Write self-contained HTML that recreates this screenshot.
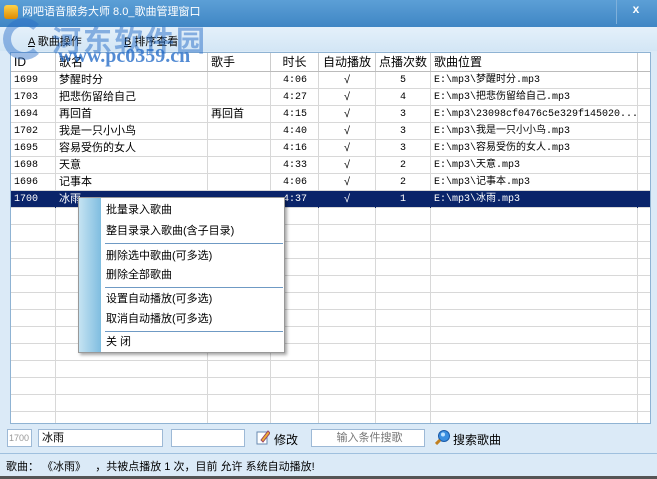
<!DOCTYPE html>
<html><head><meta charset="utf-8"><style>
*{margin:0;padding:0;box-sizing:border-box}
body{width:657px;height:479px;overflow:hidden;background:#dbeaf7;font-family:"Liberation Sans","Noto Sans CJK SC",sans-serif;font-size:11px;color:#000;position:relative}
.abs{position:absolute}
#title{left:0;top:0;width:657px;height:27px;background:linear-gradient(#5c9fd6,#3f86c4);color:#fff;font-size:11px;line-height:24px;padding-left:22px}
#menu{left:0;top:27px;width:657px;height:24px;background:linear-gradient(#e4f0fa,#d3e6f5)}
#tbl{left:10px;top:52px;width:641px;height:372px;background:#fff;border:1px solid #8fb3d3;overflow:hidden}
.row{position:absolute;left:0;width:641px;height:17px;border-bottom:1px solid #d8d8d8}
.c{position:absolute;top:0;height:17px;line-height:17px;border-right:1px solid #d8d8d8;white-space:nowrap;overflow:hidden;padding-left:3px}
.hdr .c{border-right:1px solid #ccc;height:18px;line-height:18px;font-size:12px}
.sel{background:#0a246a;color:#fff}
.sel .c{border-color:#0a246a}
.mono{font-family:"Liberation Mono","Noto Sans CJK SC",monospace;font-size:10px}
#ctx{left:78px;top:197px;width:207px;height:156px;background:#fff;border:1px solid #999;box-shadow:2px 2px 3px rgba(0,0,0,.35)}
#ctx .strip{position:absolute;left:0;top:0;width:22px;height:154px;background:linear-gradient(90deg,#c5e3f2,#7fbde0)}
#ctx .it{position:absolute;left:27px;font-size:11px;line-height:14px}
#ctx .sep{position:absolute;left:26px;width:178px;height:1px;background:#6f9ac4}
.inp{background:#fff;border:1px solid #9db9d6;height:18px;line-height:16px;padding-left:3px;font-size:11px}
</style></head><body>
<div id="title" class="abs">网吧语音服务大师 8.0_歌曲管理窗口</div>
<div class="abs" style="left:4px;top:5px;width:14px;height:14px;border-radius:3px;background:linear-gradient(#ffd34a,#e08a00)"></div>
<div class="abs" style="left:616px;top:0;width:1px;height:24px;background:#7fb0da"></div>
<div class="abs" style="left:620px;top:0;width:32px;height:20px;color:#fff;font-weight:bold;text-align:center;line-height:18px;font-size:12px">x</div>
<div id="menu" class="abs"></div>
<div class="abs" style="left:28px;top:33px;font-size:11px"><u>A</u> 歌曲操作</div>
<div class="abs" style="left:124px;top:33px;font-size:11px"><u>B</u> 排序查看</div>
<div id="tbl" class="abs">
<div class="row hdr" style="top:0;height:19px;border-bottom:1px solid #bbb">
<div class="c" style="left:0;width:45px">ID</div><div class="c" style="left:45px;width:152px">歌名</div><div class="c" style="left:197px;width:63px">歌手</div><div class="c" style="left:260px;width:48px;text-align:center;padding:0">时长</div><div class="c" style="left:308px;width:57px;text-align:center;padding:0">自动播放</div><div class="c" style="left:365px;width:55px;text-align:center;padding:0">点播次数</div><div class="c" style="left:420px;width:207px">歌曲位置</div><div class="c" style="left:627px;width:14px;border:none"></div>
</div>
<div id="rows"></div>
</div>
<div class="abs" style="left:52px;top:18px;font-size:29px;font-weight:bold;color:rgba(40,110,200,.5);letter-spacing:2px;z-index:5">河东软件园</div>
<div class="abs" style="left:58px;top:45px;font-family:'Liberation Serif',serif;font-size:20px;font-weight:bold;color:rgba(40,110,200,.8);z-index:5">www.pc0359.cn</div>
<div class="abs" style="left:3px;top:18px;width:42px;height:42px;border:8px solid rgba(40,110,200,.45);border-radius:50%;border-right-color:transparent;z-index:5"></div>
<script>
var d=[["1699","梦醒时分","","4:06","5","E:\\mp3\\梦醒时分.mp3"],["1703","把悲伤留给自己","","4:27","4","E:\\mp3\\把悲伤留给自己.mp3"],["1694","再回首","再回首","4:15","3","E:\\mp3\\23098cf0476c5e329f145020..."],["1702","我是一只小小鸟","","4:40","3","E:\\mp3\\我是一只小小鸟.mp3"],["1695","容易受伤的女人","","4:16","3","E:\\mp3\\容易受伤的女人.mp3"],["1698","天意","","4:33","2","E:\\mp3\\天意.mp3"],["1696","记事本","","4:06","2","E:\\mp3\\记事本.mp3"],["1700","冰雨","","4:37","1","E:\\mp3\\冰雨.mp3"]];
var h="";
for(var i=0;i<21;i++){var r=d[i]||["","","","","",""];var ck=d[i]?"√":"";
h+='<div class="row'+(i==7?' sel':'')+'" style="top:'+(19+i*17)+'px">'+
'<div class="c mono" style="left:0;width:45px">'+r[0]+'</div><div class="c" style="left:45px;width:152px">'+r[1]+'</div><div class="c" style="left:197px;width:63px">'+r[2]+'</div><div class="c mono" style="left:260px;width:48px;padding-left:12px">'+r[3]+'</div><div class="c" style="left:308px;width:57px;text-align:center;padding:0">'+ck+'</div><div class="c mono" style="left:365px;width:55px;text-align:center;padding:0">'+r[4]+'</div><div class="c mono" style="left:420px;width:207px">'+r[5]+'</div><div class="c" style="left:627px;width:14px;border:none"></div></div>';}
document.getElementById("rows").innerHTML=h;
</script>
<div id="ctx" class="abs"><div class="strip"></div>
<div class="it" style="top:5px">批量录入歌曲</div>
<div class="it" style="top:26px">整目录录入歌曲(含子目录)</div>
<div class="sep" style="top:45px"></div>
<div class="it" style="top:51px">删除选中歌曲(可多选)</div>
<div class="it" style="top:70px">删除全部歌曲</div>
<div class="sep" style="top:89px"></div>
<div class="it" style="top:94px">设置自动播放(可多选)</div>
<div class="it" style="top:114px">取消自动播放(可多选)</div>
<div class="sep" style="top:133px"></div>
<div class="it" style="top:137px">关 闭</div>
</div>
<div class="abs inp" style="left:7px;top:429px;width:25px;color:#999;font-size:9px;padding-left:1px">1700</div>
<div class="abs inp" style="left:38px;top:429px;width:125px">冰雨</div>
<div class="abs inp" style="left:171px;top:429px;width:74px"></div>
<svg class="abs" style="left:256px;top:429px" width="14" height="16"><rect x="1" y="3" width="10" height="12" fill="#fff" stroke="#6a8bb0"/><path d="M5 11 L12 2 L14 4 L7 13 Z" fill="#f0b030" stroke="#946"/></svg>
<div class="abs" style="left:274px;top:431px;font-size:12px">修改</div>
<div class="abs inp" style="left:311px;top:429px;width:114px;text-align:center;color:#777">输入条件搜歌</div>
<svg class="abs" style="left:435px;top:429px" width="16" height="16"><circle cx="9" cy="7" r="5.5" fill="#3b8fe0" stroke="#1a5aa8"/><circle cx="8" cy="5.5" r="2" fill="#bfe3ff"/><path d="M5 11 L1 15" stroke="#c08020" stroke-width="3"/></svg>
<div class="abs" style="left:453px;top:431px;font-size:12px">搜索歌曲</div>
<div class="abs" style="left:0;top:453px;width:657px;height:1px;background:#9fc0de"></div>
<div class="abs" style="left:6px;top:458px;font-size:11px">歌曲：&nbsp;《冰雨》&nbsp;&nbsp;&nbsp;，共被点播放 1 次，目前 允许 系统自动播放!</div>
<div class="abs" style="left:0;top:476px;width:657px;height:3px;background:#555"></div>
</body></html>
